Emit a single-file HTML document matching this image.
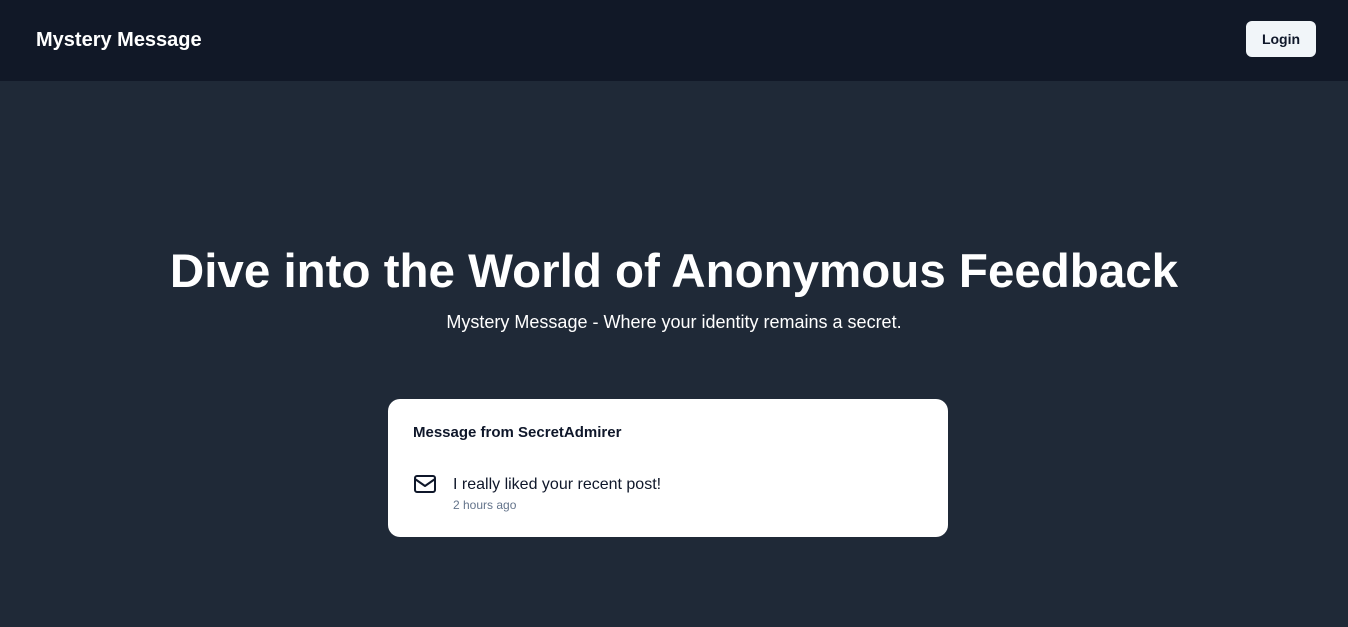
<!DOCTYPE html>
<html><head><style>
*{margin:0;padding:0;box-sizing:border-box}
body{width:1348px;height:627px;background:#1f2937;font-family:"Liberation Sans",sans-serif;color:#fff;overflow:hidden;position:relative}
.nav{height:81px;background:#111827;position:relative}
.logo{position:absolute;left:36px;top:29px;font-size:20px;font-weight:bold}
.btn{position:absolute;left:1246px;top:21px;width:70px;height:36px;background:#f1f5f9;border-radius:6px;color:#0f172a;font-size:14px;font-weight:bold;text-align:center;line-height:36px}
h1{position:absolute;left:0;width:1348px;top:243px;text-align:center;font-size:47.5px;font-weight:bold;line-height:58px}
.sub{position:absolute;left:0;width:1348px;top:310px;text-align:center;font-size:18px;line-height:24px}
.card{position:absolute;left:388px;top:399px;width:560px;height:138px;background:#fff;border-radius:12px;color:#0f172a}
.t{position:absolute;left:25px;top:25px;font-size:15px;font-weight:bold}
.ic{position:absolute;left:25px;top:74px}
.m{position:absolute;left:65px;top:77px;font-size:16px}
.time{position:absolute;left:65px;top:99px;font-size:12px;color:#64748b}
</style></head><body>
<div class="nav"><div class="logo">Mystery Message</div><div class="btn">Login</div></div>
<h1>Dive into the World of Anonymous Feedback</h1>
<div class="sub">Mystery Message - Where your identity remains a secret.</div>
<div class="card">
<div class="t">Message from SecretAdmirer</div>
<svg class="ic" width="24" height="22" viewBox="0 0 24 22" fill="none" stroke="#0f172a" stroke-width="2" stroke-linecap="round" stroke-linejoin="round"><rect x="2" y="3" width="20" height="16" rx="2"/><path d="M2 6l10 7 10-7"/></svg>
<div class="m">I really liked your recent post!</div>
<div class="time">2 hours ago</div>
</div>
</body></html>
